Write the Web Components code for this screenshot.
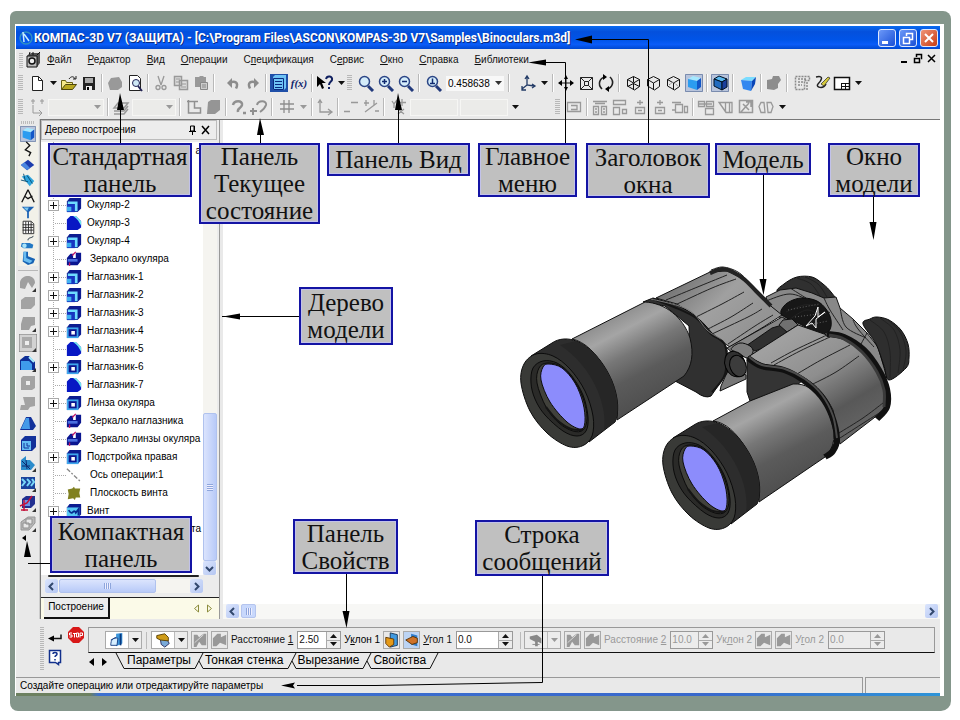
<!DOCTYPE html>
<html lang="ru">
<head>
<meta charset="utf-8">
<title>КОМПАС-3D V7</title>
<style>
html,body{margin:0;padding:0;background:#fff}
body{font:10px/14px "Liberation Sans",Arial,sans-serif;color:#000}
</style>
</head>
<body>
<slide-frame>
  <app-window></app-window>
  <leader-lines slot="over"></leader-lines>
  <call-out slot="over" x="48" y="143" w="144" h="54">Стандартная<br>панель</call-out>
  <call-out slot="over" x="199" y="143" w="121" h="81">Панель<br>Текущее<br>состояние</call-out>
  <call-out slot="over" x="327" y="143" w="143" h="33">Панель Вид</call-out>
  <call-out slot="over" x="478" y="143" w="99" h="54">Главное<br>меню</call-out>
  <call-out slot="over" x="586" y="143" w="124" h="55">Заголовок<br>окна</call-out>
  <call-out slot="over" x="715" y="143" w="96" h="32">Модель</call-out>
  <call-out slot="over" x="828" y="143" w="92" h="54">Окно<br>модели</call-out>
  <call-out slot="over" x="299" y="287" w="94" h="58">Дерево<br>модели</call-out>
  <call-out slot="over" x="50" y="516" w="142" h="57">Компактная<br>панель</call-out>
  <call-out slot="over" x="293" y="519" w="105" h="55">Панель<br>Свойств</call-out>
  <call-out slot="over" x="475" y="520" w="134" h="56">Строка<br>сообщений</call-out>
</slide-frame>
<script>
const define = (name, html, setup) => {
  const tpl = document.createElement('template');
  customElements.define(name, class extends HTMLElement {
    connectedCallback() {
      if (this.shadowRoot) return;
      const root = this.attachShadow({mode: 'open'});
      tpl.innerHTML = typeof html === 'function' ? html(this) : html;
      root.appendChild(tpl.content.cloneNode(true));
      if (setup) setup(this, root);
    }
  });
};

/* ---------- icon drawings, 18 x 18 ---------- */
const G = '#999';
const cubeWire = extra => `<g fill="none" stroke="#111"><path d="M2.5 5.5l6-3 6 3v7l-5 3.5-7-4zM2.5 5.5l6 3.5 6-3.5M8.5 9v7"/>${extra}</g>`;
const lens = inner => `<path d="M11 12l5 5" stroke="#223a7c" stroke-width="3"/><circle cx="7.5" cy="7.500" r="5" fill="#d4ecfa" stroke="#2c4686" stroke-width="1.500"/>${inner}`;
const block = `<path d="M4 1h13v12l-4 4H1V5z" fill="#0c1c90"/>`;
const greyBlob = `<path d="M2 6l4-3h10v8l-4 4H2z" fill="#a3a3a3"/>`;
const corner = `<path d="M17 14v4h-4z" fill="#333"/>`;
const ICONS = {
  app: `<path d="M2 5l4-3h9v10l-3 4H2z" fill="#555"/><path d="M2 5h10v11H2z" fill="#bbb" stroke="#111"/><circle cx="7" cy="10" r="3" fill="#eee" stroke="#111" stroke-width="1.500"/><path d="M4 4l1-3m3 3V1m4 3l3-3" stroke="#111"/>`,
  fresh: `<path d="M4.500 2.500h6l4 4v10h-10z" fill="#fff" stroke="#222"/><path d="M10.500 2.500v4h4" fill="none" stroke="#222"/>`,
  open: `<path d="M1.500 15.500v-9h4l1 2h6v2" fill="#f5e98a" stroke="#665f10"/><path d="M1.500 15.500l4-5h11l-4 5z" fill="#b8a820" stroke="#4d470c"/><path d="M9 5c2-3 5-3 6 0m-2 0h3V2" fill="none" stroke="#222"/>`,
  save: `<path d="M3 3h12v13H3z" fill="#222"/><path d="M5 4h8v5H5z" fill="#aaa"/><path d="M6 12h6v4H6z" fill="#eee"/><path d="M7 13h2v3H7z"/>`,
  print: `<path d="M2 9l3-5 8-1 3 5v5l-4 3H4z" fill="${G}"/>`,
  preview: `<path d="M3.500 1.500h8l3 3v12h-11z" fill="#fff" stroke="#222"/><circle cx="10" cy="9" r="3.500" fill="#cfe8f5" stroke="#225"/><path d="M12 12l4 5" stroke="#225" stroke-width="2"/>`,
  cut: `<g fill="none" stroke="${G}" stroke-width="1.300"><path d="M6 2l3 9M12 2L9 11"/><circle cx="6" cy="13.500" r="2"/><circle cx="12" cy="13.500" r="2"/></g>`,
  copy: `<path d="M2.500 2.500h7v9h-7zM7.500 6.500h8v9h-8z" fill="#ddd" stroke="${G}" stroke-width="1.500"/><path d="M4 5h4M4 8h3M9 10h5M9 13h5" stroke="${G}"/>`,
  paste: `<path d="M3 3h4l1-1h3l1 1h2v10H3z" fill="${G}"/><path d="M8.500 8.500h7v7h-7z" fill="#ccc" stroke="#888"/><path d="M10 11h4m-4 2h4" stroke="#888"/>`,
  undo: `<path d="M3 9l5-5v10z" fill="#8c8c8c"/><path d="M6 8.500c5-2 9 0 6 6" fill="none" stroke="#8c8c8c" stroke-width="2.500"/>`,
  redo: `<path d="M15 9l-5-5v10z" fill="#8c8c8c"/><path d="M12 8.500c-5-2-9 0-6 6" fill="none" stroke="#8c8c8c" stroke-width="2.500"/>`,
  manager: `<path d="M0 0h18v18H0z" fill="#1f4fa8"/><path d="M3 3l2-2h11v13l-2 2H3z" fill="#6ec3f5"/><path d="M3.500 4.500h10v11h-10zM5 7.500h7M5 10.500h7M5 13.500h7" fill="none" stroke="#0a2a80"/>`,
  help: `<path d="M1 2v11l3-3 2 5 2-1-2-5h4z"/><path d="M10 5c1-4 7-3 6 1-1 2-3 2-3 5m0 2v2" fill="none" stroke="#102060" stroke-width="2"/>`,
  zoom: lens(''), zoomin: lens('<path d="M5 7.500h5M7.500 5v5" stroke="#112a70" stroke-width="1.500"/>'),
  zoomout: lens('<path d="M5 7.500h5" stroke="#112a70" stroke-width="1.500"/>'),
  zoomscale: lens('<path d="M7.500 4.500v5M5 9.500h5" stroke="#112a70" stroke-width="1.500"/>'),
  axes: `<path d="M8 3v8l7 1M8 11l-5 4M6 5l2-3 2 3M13 10l3 2-3 2M3 12v4h4" fill="none" stroke="#223a66" stroke-width="1.300"/>`,
  pan: `<path d="M2 9h14M9 3v12" stroke="#111"/><path d="M1 9l4-3v6zM17 9l-4-3v6zM9 1L7 5h4zM9 17l-2-4h4z"/>`,
  frame: `<path d="M3.500 3.500h12v12h-12zM3.500 3.500l4 4M15.500 3.500l-4 4M3.500 15.500l4-4M15.500 15.500l-4-4M7.500 7.500h4v4h-4z" fill="none" stroke="#222"/>`,
  rotate: `<path d="M5 15C0 10 3 4 8 3M13 3c5 5 2 11-3 12" fill="none" stroke="#222" stroke-width="1.600"/><path d="M6 0l4 3-4 3zM12 18l-4-3 4-3z"/>`,
  cube1: cubeWire('<path d="M8.500 2.500v6M2.500 12.500l6-3 6 3"/>'), cube2: cubeWire(''), cube3: cubeWire('<path d="M4 11l4-3 5 4" stroke="#888" stroke-dasharray="2 1"/>'),
  shaded: `<path d="M0 0h18v18H0z" fill="#b8c4dc"/><path d="M.5.5h17v17H.5z" fill="none" stroke="#7a8cae"/><path d="M3 5l5-3 8 2-4 3z" fill="#a5e8ff"/><path d="M3 5l9 2v9l-9-3z" fill="#2b9cf0"/><path d="M12 7l4-3v9l-4 3z" fill="#1257c8"/>`,
  shadededge: `<path d="M0 0h18v18H0z" fill="#b8c4dc"/><path d="M.5.5h17v17H.5z" fill="none" stroke="#7a8cae"/><path d="M3 5l5-3 8 3-5 3z" fill="#5bb7ee" stroke="#012"/><path d="M3 5l8 3v8l-8-4z" fill="#236cc0" stroke="#012"/><path d="M11 8l5-3v8l-5 3z" fill="#1a3f9c" stroke="#012"/>`,
  persp: `<path d="M2 6l5-3h10l-4 4z" fill="#7adcff"/><path d="M2 6l11 1-1 10-8-2z" fill="#3488f0"/><path d="M13 7l4-4-1 7-4 7z" fill="#0a46b8"/>`,
  simple: `<path d="M2 6l5-1 1-3h6l2 4-3 4v4l-4 2-7-1z" fill="#8d8d8d"/>`,
  section: `<path d="M2.500 2.500h14v4h-5v9h-9zM5 5h9M5 8h5M5 11h4M14 8v8" fill="none" stroke="#8a8a8a" stroke-dasharray="2 1" stroke-width="1.500"/>`,
  sketch: `<path d="M3 3c9-2 5 4 2 7s5 6 8 0" fill="none" stroke="#222" stroke-width="1.500"/><path d="M8 10l7-7 2 1-6 8z" fill="#d5c93a" stroke="#222" stroke-width=".7"/>`,
  layout: `<path d="M1.500 3.500h15v12h-15z" fill="#fff" stroke="#111" stroke-width="1.500"/><path d="M8 9.500h8M8 12.500h8M8.500 9v6M12.500 9v6" stroke="#111"/>`,
  g1: `<path d="M3 3h4m5 0h4M5 1v5m9-5v5M5 7v8h9M11 12l3 3-3 3" fill="none" stroke="${G}"/>`,
  g2: `<path d="M2 10h10l4-5H6zM2 13h10l4-5M2 16h10l4-5" fill="none" stroke="${G}" stroke-width="1.500"/>`,
  g3: `<path d="M3 3.500h11M4.500 2v13h12v-5h-6v-6" fill="none" stroke="#909090" stroke-width="1.500"/>`,
  g4: `<path d="M4 4l3-2h9v10l-5 4H3z" fill="#959595"/>`,
  g5: `<path d="M3 7c1-5 10-5 9 0-1 4-5 3-4 7m5 1h3" fill="none" stroke="#909090" stroke-width="2.500"/>`,
  g6: `<path d="M7 7c1-5 10-5 9 0-1 3-3 5-6 7M3 10v7m-3-4h7" fill="none" stroke="#909090" stroke-width="2"/>`,
  grid: `<path d="M2 6h14M2 11h14M6 2v13M11 2v13" stroke="#8e8e8e" stroke-width="1.300"/>`,
  g7: `<path d="M4 2v12h11M2 5l2-3 2 3M12 11l4 3-4 3" fill="none" stroke="${G}" stroke-width="1.300"/>`,
  g8: `<path d="M9 4.500h7M2 13.500h6" stroke="${G}" stroke-width="1.300"/>`,
  g9: `<path d="M2 5h5m6 8h4M4 2v6M3 14L15 5m-3-3v5" stroke="${G}" stroke-width="1.300"/>`,
  xy: `<path d="M2 3l2 3 3-4M4 6v4M12 1v7M9 4.500h7M8 11l6 5m0-5l-6 5" fill="none" stroke="${G}" stroke-width="1.300"/>`,
  h1: `<path d="M2.500 4.500h13v9h-13zM6 7.500h6v4H6" fill="none" stroke="${G}" stroke-width="1.300"/>`,
  h2: `<path d="M2.500 8.500h5v8h-5zM10.500 8.500h5v8h-5zM2 3.500h14M4 5.500h10M4 11h2m-2 3h2m6-3h2m-2 3h2" fill="none" stroke="${G}" stroke-width="1.300"/>`,
  h3: `<path d="M2.500 2.500h12v4h-12zM2.500 9.500h6v7h-6zM11.500 11.500h4v4h-4z" fill="none" stroke="${G}" stroke-width="1.300"/>`,
  h4: `<path d="M9 2v5M6 4.500h6M4.500 9.500h9v6h-9zM7 12.500h4" fill="none" stroke="${G}" stroke-width="1.300"/>`,
  h5: `<path d="M1 4.500h9M4.500 6.500h7v8h-7zM13.500 8.500h3v6h-3zM1 12h3" fill="none" stroke="${G}" stroke-width="1.300"/>`,
  h6: `<path d="M1.500 3.500h6v5h-6zM9.500 3.500h7v5h-7zM8.500 10.500h8v6h-8zM2 6h13" fill="none" stroke="${G}" stroke-width="1.300"/>`,
  h7: `<path d="M2 4.500h13v10H9zM2 4l7 10M8.500 5v9M12.500 5v9" fill="none" stroke="${G}" stroke-width="1.300"/>`,
  h8: `<path d="M2.500 2.500h13v12h-13zM4 14l8-9M6 6l6 6M9 4h5v5" fill="none" stroke="${G}" stroke-width="1.500"/>`,
  h9: `<path d="M7 4.500H4l-2 4 2 6h4zM11 14.500l-1-10h4l2 4-2 6z" fill="none" stroke="${G}" stroke-width="1.300"/>`,
  curve: `<path d="M7 1l4 4-5 5 6 3-2 4" fill="none" stroke="#111" stroke-width="1.500"/>`,
  plane: `<path d="M1 9l8-6 7 6-8 6z" fill="#1c3cae"/><path d="M1 9l4-3 6 6-3 3z" fill="#4a86e0"/>`,
  aux: `<path d="M2 5l7-2 7 7-5 6z" fill="#2ea4dc"/><path d="M4 2l2 8m2-6l6 9M1 9l8 2" stroke="#05486c" fill="none"/>`,
  compass: `<path d="M9 2L2 16M9 2l7 14M5 9l4 3 5-3" fill="none" stroke="#111" stroke-width="1.500"/>`,
  filter: `<path d="M2 3h14l-6 6v7H8V9z" fill="#1c62b4"/><path d="M4 4h6L8 8z" fill="#7cc8f0"/>`,
  table: `<path d="M3.500 2.500h9l3 3v11h-12zM6.500 3v13M9.500 3v13M12.500 3v13M3 6.500h12M3 9.500h12M3 12.500h12" fill="#fff" stroke="#222"/>`,
  pipe: `<path d="M2 9h9l4 2-1 4H4L1 13z" fill="#2278c4"/><circle cx="5" cy="12" r="2.500" fill="#a8e4fa"/><path d="M9 6c0-4 5-2 6-5" stroke="#123" fill="none"/>`,
  bend: `<path d="M4 2h5v5l8 3-2 5-6 2-6-4z" fill="#1763b4"/><path d="M4 2h3v7l7 3-3 3-7-3z" fill="#6bbdf0"/>`,
  b1: `<path d="M1 14V8c2-8 15-8 15 1l-3 5-4-6-3 7z" fill="#a0a0a0"/>${corner}`, b2: greyBlob,
  b3: `<path d="M4 3h12v8l-4 1-2 4H2v-6z" fill="#a0a0a0"/>${corner}`,
  b4: `<path d="M0 0h18v18H0z" fill="#d2d2d2" stroke="#777"/><path d="M3 3h10v11H3z" fill="#aaa"/><path d="M6 7h4v4H6z" fill="#eee"/>${corner}`,
  b5: `<path d="M1 6l5-4h4l6 6v8H1z" fill="#0e2e96"/><path d="M2 7h8l3 3v6H2z" fill="#3f9cec"/><path d="M10 3l5 5" stroke="#a6ecff" stroke-width="2"/>${corner}`,
  b6: `<path d="M2 4l2-2h12v12l-3 2H2z" fill="#a3a3a3"/><path d="M7 7h4v4H7z" fill="#ececec"/>`,
  b7: `<path d="M4 3h12v9l-5 1-2 3H1l1-5h4z" fill="#a3a3a3"/>`,
  b8: `<path d="M7 3h5l5 9-3 4H1z" fill="#12319a"/><path d="M7 4h3l1 11H2z" fill="#459ae8"/>`,
  b9: `<path d="M2 6l4-4h11v11l-4 4H2z" fill="#12319a"/><path d="M3 7h9v9H3z" fill="#64bdf4"/><path d="M5 9v5h5M8 9v3h3" fill="none" stroke="#12319a"/>`,
  b10: `<path d="M2 6l5-4v4h4l5 5-4 5H2z" fill="#2a8ccc"/><path d="M3 7l8 8M3 12h8M7 6l1 9" stroke="#0a2a70"/>${corner}`,
  b11: `<path d="M2 3h14v12H2z" fill="#1b439c"/><path d="M3 5l3 3-3 4M8 5l3 3-3 4M13 5l2 3-3 4" fill="none" stroke="#7ad8f8" stroke-width="2"/>${corner}`,
  b12: `<path d="M3 5l4-3h9v8l-4 4H3z" fill="#223090"/><path d="M4 6h7v6H4z" fill="#6a94e8"/><path d="M1 12l7-3 5-7M5 6v11M2 16h7" fill="none" stroke="#c4123a" stroke-width="1.500"/>${corner}`,
  b13: `<path d="M2 8l7-5h7v6l-6 7H2z" fill="#b8b8b8" stroke="#969696"/><path d="M7 5h6v5H7zM4 9h6v5H4z" fill="#e8e8e8" stroke="#909090"/>${corner}`,
  t_add: block + `<path d="M1 8h9v9H1z" fill="#1736c2"/><path d="M2 5h11v11h-3V8H2z" fill="#6edcff"/><path d="M1 11h5v5H1z" fill="#43b4f0"/>`,
  t_cut: block + `<path d="M1 5h13v12H1z" fill="#3ea6ec"/><path d="M3 7h9v8H3z" fill="#0b1690"/><path d="M6 9h4v4H6z" fill="#fff"/>`,
  t_fillet: `<path d="M1 5l4-4h6l6 6v7l-4 3H1z" fill="#0818c4"/><path d="M8 1h3l6 6v5c-2-4-4-8-9-11z" fill="#6ee6ee"/>`,
  t_mirror: `<path d="M1 8l4-5h3v5h3V2h6v9l-4 5H1z" fill="#0a1690"/><path d="M2 9h11v3H2z" fill="#4a70e0"/><path d="M7 5l4-4M4 13v4" stroke="#c01868" stroke-width="1.500"/>`,
  t_axis: `<path d="M1 2l16 15" stroke="#888" stroke-width="1.500" stroke-dasharray="5 2 2 2"/>`,
  t_plane: `<path d="M2 5l5-1 2-2 1 2h6l-1 5 1 5h-5l-1 3-2-2-6 1 1-6z" fill="#808020"/>`,
  t_screw: block + `<path d="M1 5h14v12H1z" fill="#58c8f4"/><path d="M3 8c5 8 5-3 8 3l3-4v7" fill="none" stroke="#082a90" stroke-width="2"/>`,
  p1: `<path d="M8 2l7-1v12l-7 3z" fill="#3c96dc"/><path d="M2 15c0-7 3-9 8-8l-1 8zM2 9l6-3" fill="#d6efff" stroke="#123a80"/><path d="M13 2v13" stroke="#083a80" stroke-width="2"/>`,
  p2: `<path d="M6 8l8 1 2 4-5 4-4-3z" fill="#7aaad8" stroke="#225"/><path d="M2 4l9-2 4 4v4L6 9 2 7z" fill="#cf9c18" stroke="#553c00"/>`,
  p3: `<path d="M2 3h4l2 3 5-4h3v13h-5l-3-4-3 6H2z" fill="${G}"/><path d="M3 12l10-9" stroke="#ddd"/>`,
  p4: `<path d="M1 7l5-5h4v4l6-3v12l-7-3-4 4H1z" fill="${G}"/>`,
  p5: `<path d="M7 1l8 2v12l-8 2z" fill="#409ae0" stroke="#135"/><path d="M2 6l9 2v6l-5 3-4-4z" fill="#e59a18" stroke="#5c3300"/>`,
  p6: `<path d="M0 0h18v18H0z" fill="#bcd4f4"/><path d="M8 2l7 2v12l-7-2z" fill="#2e7ccc"/><path d="M2 9l8-4 5 2v5l-6 2z" fill="#cf7228" stroke="#553000"/>`,
  p7: `<path d="M2 5l8-2 5 4v6l-4-2v5H8v-5L2 8z" fill="#888"/><path d="M5 14h8" stroke="#888"/>`,
  enter: `<path d="M6 10.500h9v-4" fill="none" stroke="#111" stroke-width="1.500"/><path d="M2 10.500l6-3v6z"/>`,
  book: `<path d="M3.500 2.500h11v12h-2v2l-3-2h-6z" fill="#fff" stroke="#12308c" stroke-width="1.500"/><path d="M7 6c0-2 4-2 4 0s-2 1-2 3m0 2v1.500" fill="none" stroke="#12308c" stroke-width="1.500"/>`,
};
define('ui-icon', el => `<style>:host{display:block;width:18px;height:18px;flex:none}:host([small]){width:16px;height:16px}svg{display:block;width:100%;height:100%}</style><svg viewBox="0 0 18 18" aria-hidden="true">${ICONS[el.getAttribute('name')] || ''}</svg>`);

/* ---------- slide frame ---------- */
define('slide-frame', `<style>
:host{display:flex;position:relative;box-sizing:border-box;min-height:100vh;padding:11px 9px 9px 10px}
.edge{flex:1;display:flex;min-width:0;background:#84968b;border-radius:6px 8px 10px 8px;padding:13px 7px 15px 5px}
.mat{flex:1;display:flex;min-width:0;background:#fff;padding:2px 4px 0 1px}
</style><div class="edge"><div class="mat"><slot></slot></div></div><slot name="over"></slot>`);

define('call-out', el => `<style>
:host{position:absolute;left:${el.getAttribute('x')}px;top:${el.getAttribute('y')}px;width:${el.getAttribute('w')}px;height:${el.getAttribute('h')}px;
box-sizing:border-box;display:flex;align-items:center;justify-content:center;text-align:center;border:2px solid #1414a4;background:#c0c0c0;box-shadow:inset 0 0 0 1px #c2c2ea;
font:25px/27px "Liberation Serif","Times New Roman",serif;color:#111;white-space:nowrap}
</style><div><slot></slot></div>`);

define('leader-lines', `<style>:host{position:absolute;left:0;top:0;pointer-events:none}svg{display:block}</style>
<svg width="960" height="720" viewBox="0 0 960 720" aria-hidden="true">
<g fill="none" stroke="#000">
<path d="M120.500 143V98M260.500 143V125M398.500 143V100M565.500 143V62.500H540M648.500 143V39.500H585M763.500 175V288M873.500 197V232M299 316.500H222M50 563.500H28M346.500 574V620M542.500 576V682.500L510 683L376 685.500H297"/>
</g>
<path d="M120 93l4 17h-7zM260 118l4 17h-7zM398 93l4 17h-7zM528 62.500l18-3v6zM575 39.500l17-4v8zM763.500 295l-4-16h7zM873.500 240l-4-18h7zM223 316.500l17-3v6zM27 541l4 16h-7zM346.500 628l-4-17h7zM281 685.500l14-3-2 3 2 3z"/>
</svg>`);

/* ---------- window parts ---------- */
define('title-bar', `<style>
:host{display:flex;align-items:center;height:23px;padding:0 2px;background:linear-gradient(#0a6cf0,#0450dc 25%,#0054e8 60%,#0a5cf8 80%,#0048d0);color:#fff}
h1{flex:1;margin:0 0 0 1px;font:bold 12px/20px Roboto,"Liberation Sans",Arial,sans-serif;text-shadow:1px 1px #0a2c80;white-space:nowrap;overflow:hidden}
.w{width:18px;height:18px;padding:0;border:1px solid #dfe8fc;border-radius:3px;background:linear-gradient(135deg,#6b98f8,#1a4fd6);color:#fff;margin-left:3px}
.x{background:linear-gradient(135deg,#f09478,#c83c14)} svg{display:block}
</style>
<svg width="15" height="18" viewBox="0 0 15 18" aria-hidden="true"><circle cx="8" cy="9" r="6" fill="none" stroke="#2f90c0" stroke-width="1.500"/><path d="M5 3l1 10M6 5l5 7" stroke="#c6ecff" stroke-width="1.500"/></svg>
<h1>КОМПАС-3D V7 (ЗАЩИТА) - [C:\\Program Files\\ASCON\\KOMPAS-3D V7\\Samples\\Binoculars.m3d]</h1>
<button class="w" aria-label="Свернуть"><svg width="16" height="16"><path d="M3 11h6v3H3z" fill="#fff"/></svg></button>
<button class="w" aria-label="Восстановить"><svg width="16" height="16"><path d="M3.500 7.500h6v6h-6zM6.500 6V3.500h6v6H10" fill="none" stroke="#fff" stroke-width="1.500"/></svg></button>
<button class="w x" aria-label="Закрыть"><svg width="16" height="16"><path d="M4 4l8 8M12 4l-8 8" stroke="#fff" stroke-width="2"/></svg></button>`);

const menus = [['Ф','айл'],['Р','едактор'],['В','ид'],['О','перации'],['С','п','ецификация'],['С','е','рвис'],['О','кно'],['С','правка'],['Б','иблиотеки']];
const menuHtml = menus.map(m => `<button>${m.length === 3 ? `${m[0]}<u>${m[1]}</u>${m[2]}` : `<u>${m[0]}</u>${m[1]}`}</button>`).join('');
define('menu-bar', `<style>
:host{display:flex;align-items:center;height:22px;padding:0 3px}
nav{display:flex;gap:16px;margin-left:4px;flex:1}
button{border:0;padding:0;background:none;font:inherit;color:#111}
.grip{width:4px;height:15px;margin-right:2px;background:repeating-linear-gradient(#bbb 0 1px,#0000 1px 2px)}
.mdi{padding:0 0 0 2px}
</style><span class="grip"></span><ui-icon name="app"></ui-icon><nav>${menuHtml}</nav>
<button class="mdi" aria-label="Свернуть документ"><svg width="11" height="12"><path d="M1 9h6v2H1z"/></svg></button>
<button class="mdi" aria-label="Восстановить документ"><svg width="11" height="12"><path d="M1.500 6.500h5v4h-5zM3.500 5V2.500h5v4H8" fill="none" stroke="#000" stroke-width="1.500"/></svg></button>
<button class="mdi" aria-label="Закрыть документ"><svg width="11" height="12"><path d="M2 3l7 7M9 3l-7 7" stroke="#000" stroke-width="1.500"/></svg></button>`);

const rows = {
  main: 'grip fresh v open save | print preview | cut copy paste ||| undo redo | manager fx | help v grip zoom zoomin zoomout || zoomscale scale ||| axes v | pan frame rotate || cube1 cube2 cube3 shaded | shadededge || persp | simple || section sketch layout v',
  state: 'grip g1 combo | g2 combo2 | g3 g4 | g5 g6 || grid gv | g7 | g8 g9 || xy box box v space grip h1 | h2 h3 h4 h4 h5 | h6 h7 h8 h9 v'
};
define('tool-bar', el => `<style>
:host{display:flex;align-items:center;height:24px;padding-left:2px;overflow:hidden}
:host([set=state]) button{height:18px}
button{width:20px;height:20px;flex:none;padding:0 1px;border:0;background:none;color:#10256c;font:italic 11px/18px "Liberation Serif",serif}
.v{width:12px;padding:0}.v svg{display:block;margin:auto}
.grip{flex:none;width:5px;height:16px;margin-right:4px;background:repeating-linear-gradient(#b8b8b8 0 1px,#0000 1px 2px)}
.s{flex:none;height:18px;width:6px;background:linear-gradient(90deg,#0000 2px,#b9b9b9 2px 3px,#fff 3px 4px,#0000 4px)}
.s2{width:8px}.s3{width:12px}
.field{display:flex;flex:none;height:15px;background:#f8f8f8;align-items:center;margin:0 2px}
input{box-sizing:border-box;min-width:0;border:0;background:none;font:10px/14px "Liberation Sans",Arial,sans-serif;padding:0 2px;flex:1;height:15px}
.scale{width:58px}.combo{width:54px;background:#ebebe9;box-shadow:0 0 0 1px #f6f6f4}.combo2{width:42px}.box{width:46px;background:#ebebe9;box-shadow:0 0 0 1px #f6f6f4}
.space{width:34px;flex:none}
</style>` + rows[el.getAttribute('set')].split(' ').map(t => {
  const tri = c => `<svg width="7" height="4"><path d="M0 0h7L3.500 4z" fill="${c}"/></svg>`;
  if (t === 'grip') return '<span class="grip"></span>';
  if (t[0] === '|') return `<span class="s s${t.length}"></span>`;
  if (t === 'v' || t === 'gv') return `<button class="v" aria-label="Ещё">${tri(t === 'v' ? '#111' : '#999')}</button>`;
  if (t === 'space') return '<span class="space"></span>';
  if (t === 'fx') return '<button><b>f(x)</b></button>';
  if (t === 'scale') return `<span class="field scale"><input aria-label="Масштаб" value="0.458638"><button class="v" aria-label="Выбрать масштаб">${tri('#333')}</button></span>`;
  if (t.startsWith('combo')) return `<span class="field combo ${t}"><input disabled aria-label="Список"><button class="v" disabled aria-label="Открыть">${tri('#999')}</button></span>`;
  if (t === 'box') return '<span class="field box"><input disabled aria-label="Координата"></span>';
  return `<button aria-label="${t}"><ui-icon name="${t}"></ui-icon></button>`;
}).join(''));

define('side-palette', `<style>
:host{display:flex;flex-direction:column;align-items:center;width:23px;flex:none;overflow:hidden}
.grip{width:14px;height:3px;margin:2px 0;background:repeating-linear-gradient(90deg,#bbb 0 1px,#0000 1px 2px)}
.a{display:flex;flex-direction:column;height:140px;background:#f2f1e9}.a button{flex:1}
.b{display:flex;flex-direction:column}.b button{height:20px}
button{display:flex;align-items:center;justify-content:center;width:20px;border:0;padding:0;background:none;min-height:0}
hr{width:20px;border:0;border-top:1px solid #b8b8b8;margin:4px 0 2px}
svg{display:block;margin:2px 8px 0 0}
</style><span class="grip"></span>
<div class="a">${'shaded curve plane aux compass filter table pipe bend'.split(' ').map(n => `<button aria-label="${n}"><ui-icon small name="${n}"></ui-icon></button>`).join('')}</div><hr>
<div class="b">${[1,2,3,4,5,6,7,8,9,10,11,12,13].map(n => `<button aria-label="Операция ${n}"><ui-icon name="b${n}"></ui-icon></button>`).join('')}</div>
<svg width="4" height="6"><path d="M4 0v6L0 3z"/></svg>`);

/* ---------- model tree ---------- */
define('tree-row', el => `<style>
:host{display:flex;align-items:center;height:18px;padding-left:7px;white-space:nowrap;background:repeating-linear-gradient(#aaa 0 1px,#0000 1px 2px) 11px 0/1px 100% no-repeat}
:host([icon]){background:repeating-linear-gradient(#aaa 0 1px,#0000 1px 2px) 11px 0/1px 100% no-repeat,repeating-linear-gradient(90deg,#aaa 0 1px,#0000 1px 2px) 13px 9px/11px 1px no-repeat}
.e{width:9px;height:9px;flex:none;margin-right:8px;display:block}
:host([plus]) .e{outline:1px solid #aaa;background:linear-gradient(#111,#111) 1px 4px/7px 1px no-repeat,linear-gradient(#111,#111) 4px 1px/1px 7px no-repeat,#fff}
ui-icon{margin-right:5px}:host([child]) ui-icon{margin-right:8px}
:host([tail]) .t{margin-left:auto;margin-right:2px}
</style><span class="e"></span>${el.hasAttribute('icon') ? `<ui-icon small name="t_${el.getAttribute('icon')}"></ui-icon>` : ''}<span class="t"><slot></slot></span>`);

define('scroll-arrow', el => `<style>:host{display:block;flex:none}button{display:block;width:13px;height:14px;padding:0;border:0;border-radius:2px;background:linear-gradient(135deg,#dbe5fd,#b4c6f2)}svg{display:block;margin:auto;transform:rotate(${el.getAttribute('turn') || 0}deg)}</style>
<button aria-label="Прокрутить"><svg width="9" height="9"><path d="M6 1L2.500 4.500 6 8" fill="none" stroke="#32486e" stroke-width="2"/></svg></button>`);

const tree = [['','','tail','а'],['plus','add','',''],['plus','add','',''],['plus','add','','Окуляр-2'],['','fillet','','Окуляр-3'],['plus','add','','Окуляр-4'],['','mirror','child','Зеркало окуляра'],
['plus','add','','Наглазник-1'],['plus','add','','Наглазник-2'],['plus','add','','Наглазник-3'],['plus','cut','','Наглазник-4'],['','fillet','','Наглазник-5'],['plus','cut','','Наглазник-6'],['','fillet','','Наглазник-7'],
['plus','cut','','Линза окуляра'],['','mirror','child','Зеркало наглазника'],['','mirror','child','Зеркало линзы окуляра'],['plus','cut','','Подстройка правая'],['','axis','child','Ось операции:1'],['','plane','child','Плоскость винта'],['plus','screw','','Винт'],['','','tail','та']];
define('model-tree', `<style>
:host{display:flex;flex-direction:column;width:180px;flex:none;box-sizing:border-box;border-left:1px solid #777;border-right:1px solid #999;background:#ececec}
header{display:flex;align-items:center;height:20px;box-sizing:border-box;padding:0 4px 0 3px;border:1px solid #bbb;margin:0 2px 2px 0}
h2{flex:1;margin:0;font:inherit}
header button{border:0;background:none;padding:0;width:13px;height:14px}header svg{display:block;margin:auto}
.body{flex:1;display:flex;min-height:0}
.list{flex:1;min-width:0;background:#fff;overflow:hidden;padding-left:1px}
.v{display:flex;flex-direction:column;width:14px;margin-right:2px;background:#f5f4f0}
.v i{flex:1}
.thumb{border:1px solid #b0c2ee;box-sizing:border-box;border-radius:2px;background:linear-gradient(90deg,#dbe4fd,#b8caf8)}
.v .thumb{height:148px;display:grid;place-items:center}
.lines{width:6px;height:7px;background:repeating-linear-gradient(#8ea6dc 0 1px,#eef 1px 2px)}
.bar{height:2px;border-radius:1px;background:#222;margin:0 20px 0 7px}
.h{display:flex;height:14px;margin:2px 16px 4px 4px;background:#f5f4f0;gap:1px}
.h .thumb{width:97px;display:grid;place-items:center;background:linear-gradient(#dbe4fd,#b8caf8)}.h i{flex:1}
.h .lines{width:7px;height:6px;background:repeating-linear-gradient(90deg,#8ea6dc 0 1px,#eef 1px 2px)}
footer{display:flex;height:21px;border-top:1px solid #222;background:#fbfae8;align-items:center}
footer .tab{font:inherit;height:21px;margin:-1px 0 0 3px;width:66px;padding:0;background:#ececec;border:0;border-right:2px solid #111;border-bottom:2px solid #111}
footer span{flex:1}footer svg{margin-right:5px}
</style>
<header><h2>Дерево построения</h2><button aria-label="Закрепить"><svg width="9" height="10"><path d="M2.500 1h4v5h-4zM1 6.500h7M4.500 6v4M6 1v5" fill="none" stroke="#000"/></svg></button><button aria-label="Закрыть"><svg width="9" height="10"><path d="M1 1l7 8M8 1L1 9" stroke="#000" stroke-width="1.500"/></svg></button></header>
<div class="body"><div class="list">${tree.map(r => `<tree-row ${r[0]} ${r[1] ? `icon="${r[1]}"` : ''} ${r[2]}>${r[3]}</tree-row>`).join('')}</div>
<div class="v"><i></i><div class="thumb"><span class="lines"></span></div><scroll-arrow turn="270"></scroll-arrow></div></div>
<div class="bar"></div>
<div class="h"><scroll-arrow></scroll-arrow><div class="thumb"><span class="lines"></span></div><i></i><scroll-arrow turn="180"></scroll-arrow></div>
<footer><button class="tab">Построение</button><span></span><svg width="20" height="9"><path d="M4.500 1v7l-4-3.500zM13.500 1v7l4-3.500z" fill="none" stroke="#8c8c3c"/></svg></footer>`);

/* ---------- 3D model ---------- */
const smooth = (pts, closed = true) => {
  const n = pts.length, at = i => closed ? pts[(i + n) % n] : pts[Math.max(0, Math.min(n - 1, i))];
  let d = `M${pts[0]}`;
  for (let i = 0; i < (closed ? n : n - 1); i++) {
    const [a, b, c, e] = [at(i - 1), at(i), at(i + 1), at(i + 2)];
    d += `C${b[0] + (c[0] - a[0]) / 6} ${b[1] + (c[1] - a[1]) / 6} ${c[0] - (e[0] - b[0]) / 6} ${c[1] - (e[1] - b[1]) / 6} ${c[0]} ${c[1]}`;
  }
  return d + (closed ? 'Z' : '');
};
const P = s => s.split(' ').map(p => p.split(',').map(Number));
const blob = (s, fill, extra = '') => `<path d="${smooth(P(s))}" fill="${fill}" stroke="#0b0b0b" ${extra}/>`;
const line = (s, w = 1, c = '#151515') => `<path d="${smooth(P(s), false)}" fill="none" stroke="${c}" stroke-width="${w}"/>`;
const poly = (s, fill) => `<polygon points="${s}" fill="${fill}" stroke="#111"/>`;
const stripes = (s) => s.split(';').map(l => line(l, 1, '#222')).join('');
const objective = (dx, dy) => `<g transform="translate(${dx} ${dy})">
<path d="M531 356L552 343C559 338 569 338 576 341C590 346 604 362 612 381C619 398 619 414 615 422L589 442Z" fill="#2d2d2d" stroke="#0b0b0b"/>
<path d="M576 341C590 346 604 362 612 381C619 398 619 414 615 422L604 430C608 405 592 366 560 345Z" fill="#262626"/>
${blob('521,383 524,364 536,354 553,356 570,369 585,391 593,416 592,436 582,446 567,446 547,433 530,411', '#393a37')}
${blob('531,383 533,368 543,361 557,363 571,375 583,395 588,417 586,431 577,436 563,431 545,415 535,399', '#2a2a28')}
${blob('537,383 539,368 547,363 560,366 573,379 583,398 587,418 583,430 573,431 559,423 546,407', '#41413b')}
${blob('541,380 543,367 549,364 562,368 575,383 583,403 585,421 581,429 567,422 550,402', '#8c8cfc')}
${line('546,407 557,420 571,429 583,430', 2)}</g>`;
define('binocular-model', `<style>:host{display:block}svg{display:block}</style>
<svg width="420" height="290" viewBox="510 250 420 290" role="img" aria-label="Бинокль">
<defs>
<linearGradient id="t1" gradientUnits="userSpaceOnUse" x1="607" y1="318" x2="650" y2="400"><stop offset="0" stop-color="#8d8d8d"/><stop offset=".2" stop-color="#a5a5a5"/><stop offset=".45" stop-color="#777"/><stop offset=".7" stop-color="#5b5b5b"/><stop offset="1" stop-color="#505050"/></linearGradient>
<linearGradient id="t2" gradientUnits="userSpaceOnUse" x1="750" y1="398" x2="793" y2="480"><stop offset="0" stop-color="#8d8d8d"/><stop offset=".2" stop-color="#a5a5a5"/><stop offset=".45" stop-color="#777"/><stop offset=".7" stop-color="#5b5b5b"/><stop offset="1" stop-color="#505050"/></linearGradient>
<linearGradient id="bd" gradientUnits="userSpaceOnUse" x1="800" y1="330" x2="860" y2="430"><stop offset="0" stop-color="#a0a0a0"/><stop offset=".4" stop-color="#8e8e8e"/><stop offset=".75" stop-color="#585858"/><stop offset="1" stop-color="#646464"/></linearGradient>
<linearGradient id="bu" gradientUnits="userSpaceOnUse" x1="680" y1="280" x2="740" y2="340"><stop offset="0" stop-color="#777"/><stop offset=".5" stop-color="#a0a0a0"/><stop offset="1" stop-color="#949494"/></linearGradient>
</defs>
${blob('778,292 784,284 797,277 812,277 823,284 831,292 836,301 825,306 806,295', '#303030')}
${stripes('797,278 811,284 820,296;805,277 818,284 827,297')}
${poly('766,297 780,290 796,288 812,293 824,298 836,297 840,308 853,319 867,333 878,347 887,378 862,360 830,334 790,325 770,310', '#888')}
${stripes('766,301 790,294 812,302 830,313;824,298 830,310 843,330;853,320 858,329 874,347;840,308 846,327 866,338;867,333 861,344;790,288 806,298')}
${blob('863,324 870,319 877,317 889,320 901,330 908,344 909,358 906,368 889,380 884,366 876,344', '#2e2e2e')}
${stripes('870,320 884,332 890,352 890,378;880,318 894,330 900,350 898,373;887,319 900,332 906,351 903,370')}
${poly('656,298 683,285 710,272 727,271 743,279 757,293 772,307 782,315 765,326 730,347 715,337 697,318 677,304', 'url(#bu)')}
${stripes('666,300 700,286 727,275;675,305 712,288 736,279;696,317 722,304 744,292;706,330 731,317 753,303;712,334 748,317 762,309;728,344 755,326 773,315')}
${line('710,273 722,269 733,272 745,280 756,291 771,306', 4, '#222')}
${stripes('711,270 723,267 738,272 750,283 766,300')}
${blob('782,315 784,306 793,300 804,298 817,301 826,309 831,320 829,331 817,334 802,325', '#171717')}
${stripes('786,312 804,305 818,306;790,319 807,310 823,317')}
<path d="M788 310l31-6m-24 13l31-4m-18 12l20-4" stroke="#606060" stroke-dasharray="1 2"/>
<path d="M806 326l9-10 3-9v10l7-5-9 7v9l-4-5-6 3" fill="none" stroke="#fff"/>
${poly('727,348 761,329 782,317 796,325 762,349 748,357 735,355', '#858585')}
${poly('746,346 772,328 782,325 787,332 763,348 755,351', '#303030')}
${poly('783,320 792,319 798,325 787,332 779,325', '#707070')}
${poly('721,386 730,366 746,375 746,379 720,391', '#777')}
<path d="M643 302L653 298L667 302C688 308 700 318 711 332L723 343Q728 347 727 354V373L711 396Q705 399 696 392L675 381L690 363L689 326L665 306Z" fill="#303030" stroke="#0b0b0b"/>
${line('653,299 674,307 696,318 711,334 725,345 725,374 712,392', 2)}
${line('651,299 679,306 694,314 707,330 721,339', 1, '#777')}
<path d="M572 339L645 302C665 303 683 317 690 338C694 354 692 366 684 376L617 420C620 389 598 344 572 339Z" fill="url(#t1)" stroke="#111"/>
<ellipse cx="735" cy="364" rx="10" ry="13" fill="#303030" stroke="#000" transform="rotate(-20 735 364)"/><ellipse cx="738" cy="366" rx="8" ry="11" fill="#3c3c3c" stroke="#000" transform="rotate(-20 738 366)"/>
${blob('731,349 740,343 750,346 753,352 747,358 739,353', '#7d7d7d')}
<path d="M748 357L798 325L827 335C849 336 866 348 878 370C887 385 889 399 883 411L840 444L833 410C820 384 804 376 783 368L763 364Z" fill="url(#bd)" stroke="#111"/>
${stripes('771,363 795,350 827,335;774,365 800,351 830,337;797,374 821,360 850,345;813,384 836,372 859,356;839,433 863,418 883,403;840,438 865,422 884,410')}
${line('827,334 844,337 864,350 879,370 887,389 887,407 877,419', 6, '#111')}
${line('829,335 844,339 862,352 877,372 884,390 884,407', 3, '#3a3a3a')}
<path d="M747 358L762 366L786 371L803 380L796 386L750 401L747 392Z" fill="#343434" stroke="#111"/>
<path d="M713 421L750 401L793 384C818 382 831 412 834 433Q835 447 825 457L759 502C761 465 737 423 713 421Z" fill="url(#t2)" stroke="#111"/>
${line('748,358 761,366 784,370 803,380 821,396 832,416 837,439 833,451 825,457', 6, '#101010')}
${line('749,357 762,365 785,369 805,379 822,395 833,416 837,438', 2, '#4c4c4c')}
${objective(0, 0)}
${objective(142, 82)}
</svg>`);

define('model-view', `<style>
:host{display:flex;flex-direction:column;flex:1;min-width:0;margin-left:3px;position:relative;background:#fff;overflow:hidden}
.canvas{flex:1}
binocular-model{position:absolute;left:287px;top:130px}
.h{display:flex;height:14px;gap:2px;padding:0 2px 1px 3px;background:#f7f7f5}.h i{flex:1}
.thumb{width:13px;border:1px solid #b4c4ee;border-radius:2px;display:grid;place-items:center;background:#c8d8fc}
.thumb span{width:6px;height:7px;background:repeating-linear-gradient(90deg,#8ea6dc 0 1px,#eef 1px 2px)}
</style><div class="canvas"></div><binocular-model></binocular-model>
<div class="h"><scroll-arrow></scroll-arrow><div class="thumb"><span></span></div><i></i><scroll-arrow turn="180"></scroll-arrow></div>`);

/* ---------- properties ---------- */
define('spin-field', el => { const d = el.hasAttribute('off') ? 'disabled' : '', c = d ? '#999' : '#111'; return `<style>
:host{display:flex;align-items:center;flex:none}
label{white-space:nowrap;margin-right:4px;color:${c}}
.f{display:flex;height:18px;box-sizing:border-box;border:1px solid #999;background:${d ? '#ececec' : '#fff'};width:${el.getAttribute('w')}px}
input{flex:1;min-width:0;border:0;background:none;padding:0 1px;font:inherit;color:${c}}
.s{display:flex;flex-direction:column;width:13px;border-left:1px solid #aaa;background:#ececec}
button{flex:1;min-height:0;border:0;padding:0;background:none}button+button{border-top:1px solid #aaa}svg{display:block;margin:auto}
</style><label for="i">${el.getAttribute('label')}</label><span class="f"><input id="i" value="${el.getAttribute('value')}" ${d}><span class="s">
<button ${d} aria-label="Больше"><svg width="7" height="4"><path d="M0 4h7L3.500 0z" fill="${c}"/></svg></button><button ${d} aria-label="Меньше"><svg width="7" height="4"><path d="M0 0h7L3.500 4z" fill="${c}"/></svg></button></span></span>`; });

const pbtn = (n, off) => `<button class="p" ${off ? 'disabled' : ''} aria-label="${n}"><ui-icon small name="${n}"></ui-icon></button>`;
const pdrop = (n, off) => `<button class="d" ${off ? 'disabled' : ''} aria-label="${n}"><ui-icon small name="${n}"></ui-icon><span><svg width="7" height="4"><path d="M0 0h7L3.500 4z" fill="${off ? '#999' : '#111'}"/></svg></span></button>`;
const edge = d => `<svg class="sl" width="12" height="16"><path d="${d}" fill="none" stroke="#111"/></svg>`;
define('property-panel', `<style>
:host{display:flex;height:58px;box-sizing:border-box;padding:8px 5px 0 24px}
.grip{width:4px;height:43px;background:repeating-linear-gradient(#b8b8b8 0 1px,#0000 1px 2px)}
.cmd{display:grid;grid-template-columns:20px 20px;grid-auto-rows:19px;width:42px;padding-left:2px;row-gap:1px;align-content:start}
button{border:0;background:none;padding:0;font:inherit;color:inherit}
.right{flex:1;min-width:0}
.row{display:flex;align-items:center;gap:3px;height:26px;box-sizing:border-box;border:1px solid #999;border-bottom:1px solid #111;padding-left:16px;overflow:hidden}
.p{width:17px;height:18px;box-sizing:border-box;border:1px solid #aaa;flex:none;overflow:hidden}
.d{display:flex;align-items:center;width:37px;height:18px;box-sizing:border-box;border:1px solid #aaa;flex:none;background:#fff}
.d[disabled]{background:#ececec}
.d ui-icon{margin:0 3px}.d span{flex:1;align-self:stretch;display:grid;place-items:center;border-left:1px solid #bbb;background:#ececec}
.bar{width:1px;height:17px;background:#bbb;margin:0 1px}
.wide{margin:0 0 0 4px}
.off{color:#999}
.tabs{display:flex;height:17px}
.nav{display:flex;align-items:center;width:25px;gap:6px;padding-left:1px}
.t{height:16px;box-sizing:border-box;font-size:12px;line-height:15px;padding:0 1px;border-bottom:1px solid #111;white-space:nowrap}
.sl{flex:none;display:block}
</style>
<span class="grip"></span>
<div class="cmd"><button aria-label="Создать"><ui-icon name="enter"></ui-icon></button>
<button aria-label="Прервать"><svg width="16" height="16" viewBox="0 0 16 16"><path d="M5 0h6l5 5v6l-5 5H5l-5-5V5z" fill="#d81818"/><path d="M1.500 6h2.500M1.500 6v2H4v2H1.500M5 6.500h3M6.500 6v4.500M8.500 6h2v4h-2zM12 10.500V6h2.500v2.500H12" fill="none" stroke="#fff"/></svg></button>
<button aria-label="Справка"><ui-icon name="book"></ui-icon></button></div>
<div class="right"><div class="row">
${pdrop('p1')}<span class="bar"></span>${pdrop('p2')}${pbtn('p3', 1)}${pbtn('p4', 1)}
<spin-field label="Расстояние &lt;u&gt;1&lt;/u&gt;" value="2.50" w="44"></spin-field>
<span>У<u>к</u>лон 1</span>${pbtn('p5')}${pbtn('p6')}
<spin-field label="&lt;u&gt;У&lt;/u&gt;гол 1" value="0.0" w="57"></spin-field>
<span class="bar wide"></span>${pdrop('p7', 1)}${pbtn('p3', 1)}${pbtn('p4', 1)}
<spin-field off label="Расстояние &lt;u&gt;2&lt;/u&gt;" value="10.0" w="43"></spin-field>
<span class="off">Ук<u>л</u>он 2</span>${pbtn('p4', 1)}${pbtn('p4', 1)}
<spin-field off label="У&lt;u&gt;г&lt;/u&gt;ол 2" value="0.0" w="57"></spin-field>
</div>
<div class="tabs"><span class="nav"><svg width="6" height="8"><path d="M5 0v8L0 4z"/></svg><svg width="6" height="8"><path d="M1 0v8l5-4z"/></svg></span>
${edge('M2 0l8 15.500h2')}<button class="t">Параметры</button>${edge('M0 15.500h3L11 0M7 8l4 7.500h1')}<button class="t">Тонкая стенка</button>${edge('M0 15.500h3L11 0M7 8l4 7.500h1')}<button class="t">Вырезание</button>${edge('M0 15.500h3L11 0M7 8l4 7.500h1')}<button class="t">Свойства</button>${edge('M0 15.500h3L11 0')}</div></div>`);

define('status-bar', `<style>
:host{display:flex;height:16px;gap:2px}
span{box-sizing:border-box;border-top:1px solid #999;padding-left:4px;line-height:16px;white-space:nowrap}
.m{flex:1;border-right:1px solid #999}.r{width:75px;border-left:1px solid #999}
</style><span class="m">Создайте операцию или отредактируйте параметры</span><span class="r"></span>`);

define('app-window', `<style>
:host{flex:1;min-width:0;display:flex;flex-direction:column;background:#e9e9e9}
main{flex:1;display:flex;min-height:0}
main side-palette{border-right:1px solid #ccc}
.work{flex:1;display:flex;min-width:0;border-top:1px solid #777}
.task{height:3px;background:linear-gradient(90deg,#6c8060 8%,#3c70d0 9%,#3868cc 75%,#2e94d8)}
</style><title-bar></title-bar><menu-bar></menu-bar><tool-bar set="main"></tool-bar><tool-bar set="state"></tool-bar>
<main><side-palette></side-palette><div class="work"><model-tree></model-tree><model-view></model-view></div></main>
<property-panel></property-panel><status-bar></status-bar><div class="task"></div>`);
</script>
</body>
</html>
